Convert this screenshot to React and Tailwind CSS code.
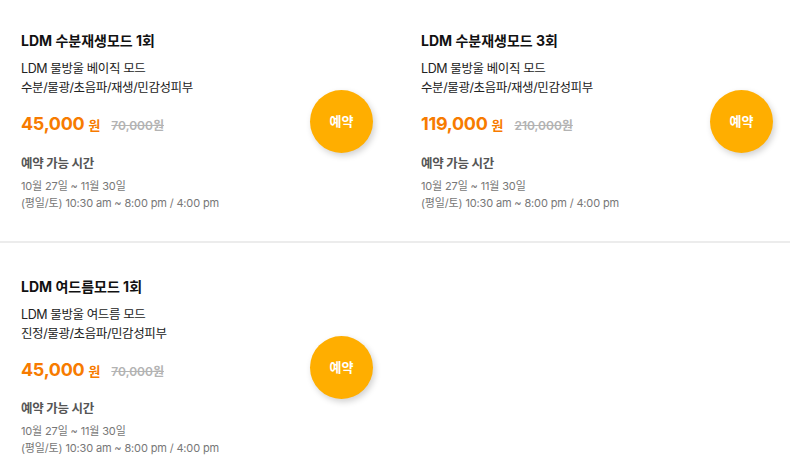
import React from "react";

const items = [
  {
    title: "LDM 수분재생모드 1회",
    sub1: "LDM 물방울 베이직 모드",
    sub2: "수분/물광/초음파/재생/민감성피부",
    price: "45,000",
    orig: "70,000",
  },
  {
    title: "LDM 수분재생모드 3회",
    sub1: "LDM 물방울 베이직 모드",
    sub2: "수분/물광/초음파/재생/민감성피부",
    price: "119,000",
    orig: "210,000",
  },
  {
    title: "LDM 여드름모드 1회",
    sub1: "LDM 물방울 여드름 모드",
    sub2: "진정/물광/초음파/민감성피부",
    price: "45,000",
    orig: "70,000",
  },
];

function Card({ item, top }) {
  return (
    <div className={`w-[400px] flex items-center justify-between pl-[21px] pr-[27px] ${top}`}>
      <div className="flex flex-col">
        <div className="text-[14px] font-bold text-[#111] leading-[18px]">{item.title}</div>
        <div className="mt-[9px] text-[12.5px] tracking-[-0.4px] text-[#222] leading-[19px]">{item.sub1}</div>
        <div className="text-[12.5px] tracking-[-0.4px] text-[#222] leading-[19px]">{item.sub2}</div>
        <div className="mt-[16px] flex items-baseline">
          <span className="text-[18px] font-bold text-[#f77b00] leading-[22px] tracking-[-0.3px]">{item.price}</span>
          <span className="ml-[4px] text-[13px] font-bold text-[#f77b00]">원</span>
          <span className="ml-[11px] text-[12px] font-semibold text-[#b3b3b3] line-through">{item.orig}원</span>
        </div>
        <div className="mt-[19px] text-[12.5px] tracking-[-0.3px] font-semibold text-[#555] leading-[18px]">예약 가능 시간</div>
        <div className="mt-[5px] text-[11px] tracking-[-0.15px] text-[#777] leading-[17px]">10월 27일 ~ 11월 30일</div>
        <div className="text-[11px] tracking-[-0.15px] text-[#777] leading-[17px]">(평일/토) 10:30 am ~ 8:00 pm / 4:00 pm</div>
      </div>
      <button className="w-[63px] h-[63px] rounded-full bg-[#ffae00] text-white text-[13px] font-bold shadow-[2px_3px_6px_rgba(0,0,0,0.18)] flex items-center justify-center">
        예약
      </button>
    </div>
  );
}

export default function App() {
  return (
    <div
      className="w-[800px] h-[465px] bg-white overflow-hidden"
      style={{ fontFamily: 'Inter, "Noto Sans CJK KR", sans-serif' }}
    >
      <div className="flex pb-[29px]">
        <Card item={items[0]} top="pt-[32px]" />
        <Card item={items[1]} top="pt-[32px]" />
      </div>
      <div className="w-[790px] h-[2px] bg-[#ececec]" />
      <div className="flex">
        <Card item={items[2]} top="pt-[35px]" />
      </div>
    </div>
  );
}
